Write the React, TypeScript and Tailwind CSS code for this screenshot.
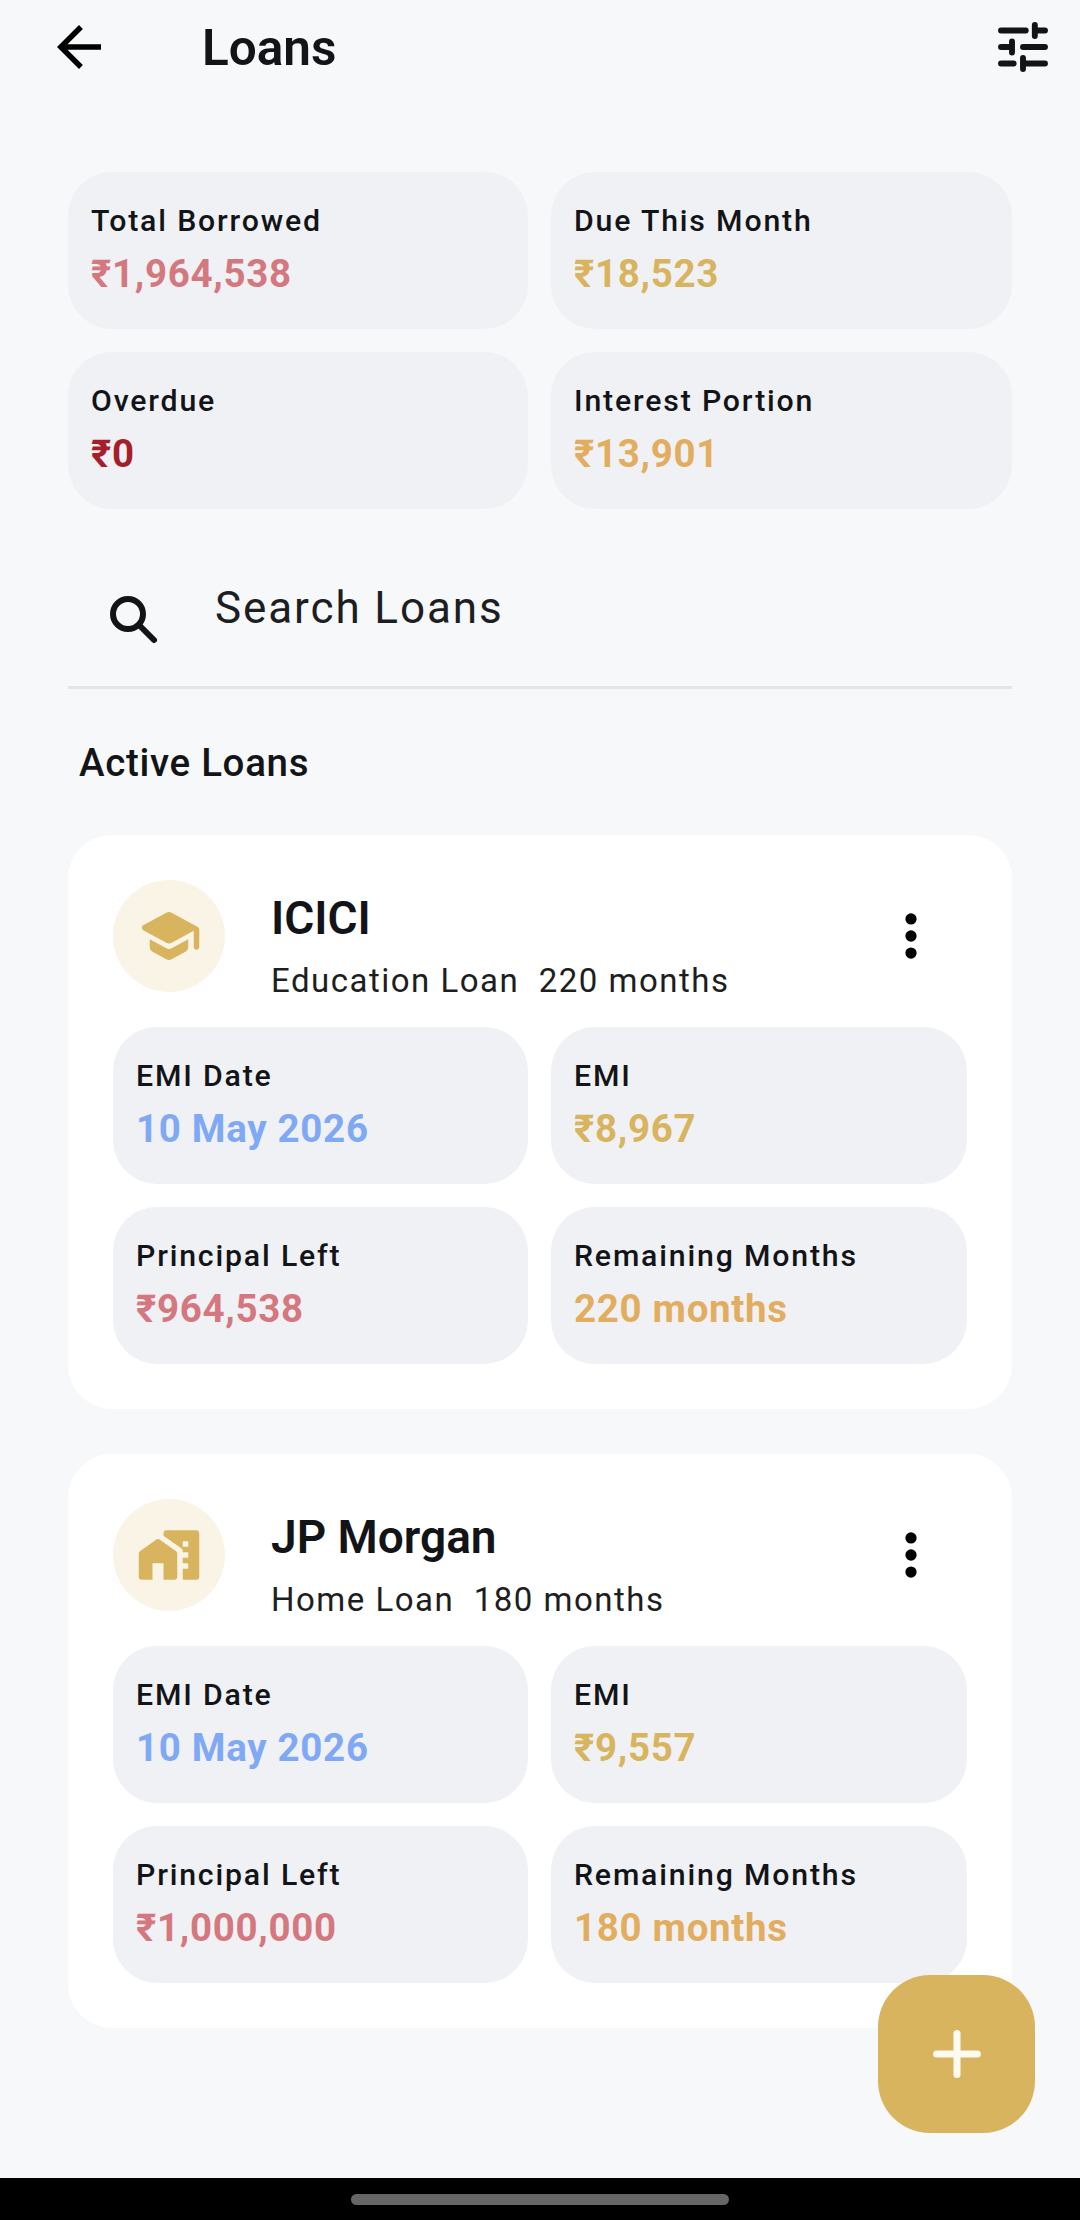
import { Plus } from 'lucide-react';

interface Stat {
  label: string;
  value: string;
  color: string;
}

interface Loan {
  bank: string;
  kind: string;
  months: string;
  icon: 'school' | 'home';
  stats: Stat[];
}

const summary: Stat[] = [
  { label: 'Total Borrowed', value: '₹1,964,538', color: 'text-[#d4777f]' },
  { label: 'Due This Month', value: '₹18,523', color: 'text-[#d9b45f]' },
  { label: 'Overdue', value: '₹0', color: 'text-[#a61e2c]' },
  { label: 'Interest Portion', value: '₹13,901', color: 'text-[#e3ad5f]' },
];

const loans: Loan[] = [
  {
    bank: 'ICICI',
    kind: 'Education Loan',
    months: '220 months',
    icon: 'school',
    stats: [
      { label: 'EMI Date', value: '10 May 2026', color: 'text-[#7fa8f5]' },
      { label: 'EMI', value: '₹8,967', color: 'text-[#d9b45f]' },
      { label: 'Principal Left', value: '₹964,538', color: 'text-[#d4777f]' },
      { label: 'Remaining Months', value: '220 months', color: 'text-[#e3ad5f]' },
    ],
  },
  {
    bank: 'JP Morgan',
    kind: 'Home Loan',
    months: '180 months',
    icon: 'home',
    stats: [
      { label: 'EMI Date', value: '10 May 2026', color: 'text-[#7fa8f5]' },
      { label: 'EMI', value: '₹9,557', color: 'text-[#d9b45f]' },
      { label: 'Principal Left', value: '₹1,000,000', color: 'text-[#d4777f]' },
      { label: 'Remaining Months', value: '180 months', color: 'text-[#e3ad5f]' },
    ],
  },
];

function StatTile({ stat }: { stat: Stat }) {
  return (
    <div className="h-[156.5px] rounded-[44px] bg-[#f0f1f4] pl-[23px] pt-[27px]">
      <div className="text-[30.25px] leading-[44px] font-medium tracking-[1.83px] text-[#121418]">{stat.label}</div>
      <div className={`text-[38.5px] leading-[44px] mt-[9px] font-bold tracking-[0.69px] ${stat.color}`}>{stat.value}</div>
    </div>
  );
}

function LoanIcon({ icon }: { icon: Loan['icon'] }) {
  return (
    <div className="w-[112px] h-[112px] rounded-full bg-[#f9f4e6] flex items-center justify-center">
      {icon === 'school' ? (
        <svg viewBox="0 0 24 24" className="w-[66px] h-[66px] fill-[#d9b45f]">
          <path d="M5 13.18v2.81c0 .73.4 1.41 1.04 1.76l5 2.73c.6.33 1.32.33 1.92 0l5-2.73c.64-.35 1.04-1.03 1.04-1.76v-2.81l-6.04 3.3c-.6.33-1.32.33-1.92 0L5 13.18zm6.04-9.66l-8.43 4.6c-.69.38-.69 1.38 0 1.76l8.43 4.6c.6.33 1.32.33 1.92 0L21 10.09V16c0 .55.45 1 1 1s1-.45 1-1V9.59c0-.37-.2-.7-.52-.88l-9.52-5.19c-.6-.32-1.32-.32-1.92 0z" />
        </svg>
      ) : (
        <svg viewBox="0 0 24 24" className="w-[66px] h-[66px] fill-[#d9b45f]">
          <path d="M1 11.5V20c0 .55.45 1 1 1h4v-6h4v6h4c.55 0 1-.45 1-1v-8.5c0-.33-.16-.63-.42-.82l-6-4.3c-.35-.25-.81-.25-1.16 0l-6 4.3c-.26.19-.42.49-.42.82z" />
          <path d="M11 3c-.55 0-1 .45-1 1v.97l6.58 4.7c.26.19.42.49.42.82V11h2v2h-2v2h2v2h-2v4h5c.55 0 1-.45 1-1V4c0-.55-.45-1-1-1H11zm8 6h-2V7h2v2z" />
        </svg>
      )}
    </div>
  );
}

function LoanCard({ loan }: { loan: Loan }) {
  return (
    <div className="rounded-[44px] bg-white p-[45px]">
      <div className="flex h-[147px] items-start">
        <LoanIcon icon={loan.icon} />
        <div className="ml-[46px] flex-1">
          <div className="text-[46px] leading-[52px] mt-[12px] font-semibold text-[#121418]">{loan.bank}</div>
          <div className="text-[33px] leading-[44px] mt-[15px] tracking-[1.5px] text-[#1c1e22] whitespace-pre">
            {loan.kind}  {loan.months}
          </div>
        </div>
        <svg viewBox="0 0 24 24" className="w-[66px] h-[66px] mt-[23px] mr-[23px] fill-black">
          <circle cx="12" cy="5.8" r="2.05" />
          <circle cx="12" cy="12" r="2.05" />
          <circle cx="12" cy="18.2" r="2.05" />
        </svg>
      </div>
      <div className="grid grid-cols-[415px_416px] gap-x-[23px] gap-y-[23.5px]">
        {loan.stats.map((stat) => (
          <StatTile key={stat.label} stat={stat} />
        ))}
      </div>
    </div>
  );
}

export default function App() {
  return (
    <div className="relative w-[1080px] h-[2220px] overflow-hidden bg-[#f7f8fa] font-['Roboto',sans-serif] flex flex-col">
      {/* Top bar */}
      <div className="flex h-[94px] items-center pl-[46px] pr-[24px]">
        <svg viewBox="0 0 24 24" className="w-[66px] h-[66px] fill-black">
          <path d="M20 11H7.83l5.59-5.59L12 4l-8 8 8 8 1.41-1.41L7.83 13H20v-2z" />
        </svg>
        <div className="ml-[90px] mt-[2px] text-[49.5px] font-semibold text-[#121418] flex-1">Loans</div>
        <svg viewBox="0 0 24 24" className="w-[66px] h-[66px] fill-none stroke-[#121418] stroke-[2.15]" strokeLinecap="round">
          <path d="M4 6h9M16.3 4v4M16.3 6H20M4 12h3.2M8 10v4M12 12h8M4 18h4.6M12 16v4M12 18h8" />
        </svg>
      </div>

      <div className="px-[68px] pt-[78px]">
        {/* Summary */}
        <div className="grid grid-cols-[460px_461px] gap-x-[23px] gap-y-[23.5px]">
          {summary.map((stat) => (
            <StatTile key={stat.label} stat={stat} />
          ))}
        </div>

        {/* Search */}
        <div className="flex h-[180.5px] items-center border-b-[3px] border-[#e4e5e9] mb-[52px]">
          <svg viewBox="0 0 24 24" className="ml-[37px] mt-[47px] w-[60px] h-[60px] fill-none stroke-[#121418] stroke-[2.4]">
            <circle cx="9.2" cy="9.2" r="6" />
            <path d="M13.6 13.6L19.6 19.6" strokeLinecap="round" />
          </svg>
          <div className="ml-[50px] mt-[22px] text-[44px] font-normal tracking-[1.9px] text-[#1c1e22]">Search Loans</div>
        </div>

        <div className="pl-[11px] text-[38.5px] leading-[44px] tracking-[0.69px] font-medium text-[#121418] mb-[50px]">Active Loans</div>

        {/* Loans */}
        <div className="flex flex-col gap-[45.5px]">
          {loans.map((loan) => (
            <LoanCard key={loan.bank} loan={loan} />
          ))}
        </div>
      </div>

      {/* Add button */}
      <div className="absolute left-[878px] top-[1975px] w-[157px] h-[158px] rounded-[52px] bg-[#d9b45f] flex items-center justify-center">
        <Plus size={70} strokeWidth={2.4} className="text-[#fdfaf2]" />
      </div>

      {/* Android nav bar */}
      <div className="absolute left-0 right-0 bottom-0 h-[42px] bg-black flex justify-center pt-[16px]">
        <div className="w-[378px] h-[11px] rounded-full bg-[#666666]" />
      </div>
    </div>
  );
}
